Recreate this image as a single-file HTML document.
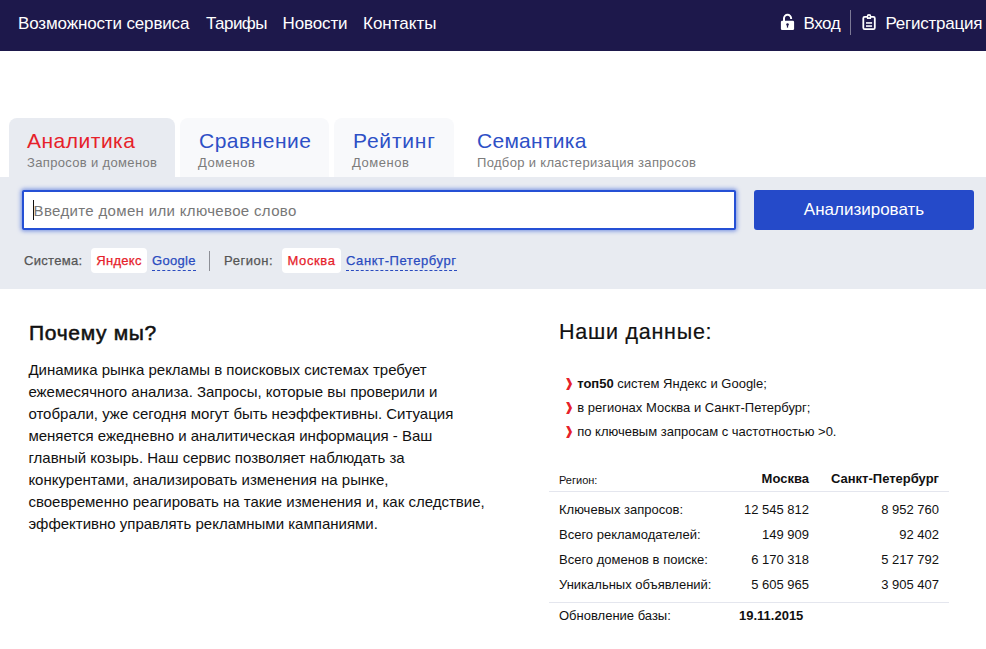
<!DOCTYPE html>
<html lang="ru">
<head>
<meta charset="utf-8">
<title>Аналитика запросов и доменов</title>
<style>
*{box-sizing:border-box;margin:0;padding:0}
html,body{width:986px;height:649px;overflow:hidden;background:#fff}
body{position:relative;font-family:"Liberation Sans",sans-serif;color:#111}
.abs{position:absolute;white-space:nowrap}
#hdr{position:absolute;left:0;top:0;width:986px;height:51px;background:#1d184b}
.nav{position:absolute;top:12px;height:24px;line-height:24px;font-size:17px;color:#fff;white-space:nowrap}
#panel{position:absolute;left:0;top:177px;width:986px;height:112px;background:#e8ebf1}
.tab{position:absolute;top:118px;height:59px;border-radius:8px 8px 0 0;background:#f8f9fb}
.tab.on{background:#e8ebf1}
.tab b{position:absolute;left:18px;top:9.5px;font-weight:400;font-size:21px;line-height:26px;color:#2e50c6;white-space:nowrap}
.tab.on b{color:#e6212a}
.tab i{position:absolute;left:18px;top:36px;font-style:normal;font-size:13px;line-height:18px;color:#7c7c7c;white-space:nowrap}
#inp{position:absolute;left:22px;top:190px;width:714px;height:40px;background:#fff;border:2px solid #2550d5;box-shadow:0 0 4px 1px rgba(37,80,213,.6);border-radius:2px}
#inp span{position:absolute;left:9.6px;top:9px;letter-spacing:.34px;font-size:15px;line-height:20px;color:#777;white-space:nowrap}
#inp u{position:absolute;left:9px;top:8px;width:1px;height:20px;background:#111}
#btn{position:absolute;left:754px;top:190px;width:220px;height:40px;background:#254ac9;border-radius:3px;color:#fff;font-size:17px;line-height:40px;text-align:center}
.f{position:absolute;top:250px;height:22px;line-height:22px;font-size:13px;font-weight:400;-webkit-text-stroke:.25px currentColor;letter-spacing:.32px;white-space:nowrap;color:#555}
.pill{background:#fff;border-radius:4px;color:#e6212a;text-align:center;top:248px;height:25px;line-height:25px}
.lnk{color:#2a4bbf}
.lnk:after{content:"";position:absolute;left:0;right:0;top:20px;border-top:1px dashed #2a4bbf}
h2{position:absolute;font-size:21px;line-height:28px;white-space:nowrap;color:#111}
#para{position:absolute;left:28.4px;top:359px;white-space:nowrap;font-size:15px;line-height:22px;color:#111}
.bul{position:absolute;left:564.2px;font-size:13px;line-height:24px;white-space:nowrap;color:#111}
.bul em{font-style:normal;color:#e6212a;display:inline-block;width:13px;font-size:12px;line-height:12px;position:relative;top:-1px}
.row{position:absolute;left:549px;width:400px;height:25px;font-size:13px;line-height:25px;color:#111}
.row span{position:absolute;white-space:nowrap}
.row .c1{left:10px}
.row .c2{right:140px;text-align:right}
.row .c3{right:10px;text-align:right}
.hr{position:absolute;left:549px;width:400px;height:1px;background:#e4e6ee}
</style>
</head>
<body>
<div id="hdr">
  <span class="nav" style="left:18px;letter-spacing:-.14px">Возможности сервиса</span>
  <span class="nav" style="left:206px;letter-spacing:-.55px">Тарифы</span>
  <span class="nav" style="left:282.5px;letter-spacing:-.13px">Новости</span>
  <span class="nav" style="left:363px">Контакты</span>
  <svg class="abs" style="left:775px;top:9px" width="30" height="26" viewBox="775 9 30 26">
    <rect x="780.9" y="20.7" width="13.2" height="9.3" rx="1.3" fill="#fff"/>
    <path d="M784 21.5 V18.35 A3.55 3.55 0 0 1 791.1 18.35 V19" fill="none" stroke="#fff" stroke-width="2"/>
    <circle cx="787.5" cy="24.4" r="1.25" fill="#1d184b"/><rect x="786.9" y="24.4" width="1.2" height="3.2" fill="#1d184b"/>
  </svg>
  <span class="nav" style="left:803.5px;letter-spacing:-.45px">Вход</span>
  <div class="abs" style="left:850px;top:10px;width:1px;height:25px;background:#7c7996"></div>
  <svg class="abs" style="left:855px;top:9px" width="30" height="26" viewBox="855 9 30 26">
    <rect x="863.3" y="16.9" width="11.5" height="12.3" rx="1.4" fill="none" stroke="#fff" stroke-width="1.8"/>
    <rect x="866.9" y="15.6" width="4.2" height="3.4" rx=".6" fill="#fff"/>
    <circle cx="869" cy="16.4" r="2.35" fill="#fff"/>
    <circle cx="869" cy="16.5" r=".85" fill="#1d184b"/>
    <rect x="866" y="22.1" width="6.1" height="1.7" fill="#f0f0f6"/>
    <rect x="866" y="25.2" width="6.1" height="1.7" fill="#f0f0f6"/>
  </svg>
  <span class="nav" style="left:885.5px;letter-spacing:-.24px">Регистрация</span>
</div>

<div class="tab on" style="left:9px;width:166px"><b style="letter-spacing:.5px">Аналитика</b><i style="letter-spacing:.34px">Запросов и доменов</i></div>
<div class="tab" style="left:180px;width:149px"><b style="letter-spacing:.5px;left:19px">Сравнение</b><i style="letter-spacing:.55px">Доменов</i></div>
<div class="tab" style="left:334px;width:120px"><b style="letter-spacing:.8px;left:19px">Рейтинг</b><i style="letter-spacing:.55px">Доменов</i></div>
<div class="tab" style="left:459px;width:260px;background:none"><b style="letter-spacing:.27px">Семантика</b><i style="letter-spacing:.33px">Подбор и кластеризация запросов</i></div>

<div id="panel"></div>
<div id="inp"><u></u><span>Введите домен или ключевое слово</span></div>
<div id="btn">Анализировать</div>

<span class="f" style="left:24px">Система:</span>
<span class="f pill" style="left:91px;width:56px">Яндекс</span>
<span class="f lnk" style="left:152px">Google</span>
<div class="abs" style="left:209px;top:251px;width:1px;height:20px;background:#8d8f96"></div>
<span class="f" style="left:224px;letter-spacing:.55px">Регион:</span>
<span class="f pill" style="left:282px;width:59px;letter-spacing:.6px">Москва</span>
<span class="f lnk" style="left:346px;letter-spacing:.58px">Санкт-Петербург</span>

<h2 style="left:29px;top:319px;font-weight:400;-webkit-text-stroke:.55px #111;letter-spacing:.68px">Почему мы?</h2>
<p id="para">Динамика рынка рекламы в поисковых системах требует<br>ежемесячного анализа. Запросы, которые вы проверили и<br>отобрали, уже сегодня могут быть неэффективны. Ситуация<br>меняется ежедневно и аналитическая информация - Ваш<br>главный козырь. Наш сервис позволяет наблюдать за<br>конкурентами, анализировать изменения на рынке,<br>своевременно реагировать на такие изменения и, как следствие,<br>эффективно управлять рекламными кампаниями.</p>

<h2 style="left:559px;top:318px;font-weight:400;font-size:21.5px;letter-spacing:.75px;-webkit-text-stroke:.2px #111">Наши данные:</h2>
<div class="bul" style="top:371.5px"><em>❱</em><strong>топ50</strong> систем Яндекс и Google;</div>
<div class="bul" style="top:395.5px"><em>❱</em>в регионах Москва и Санкт-Петербург;</div>
<div class="bul" style="top:419.5px"><em>❱</em>по ключевым запросам с частотностью &gt;0.</div>

<div class="row" style="top:466px"><span class="c1" style="font-size:11px;top:2px">Регион:</span><span class="c2"><strong>Москва</strong></span><span class="c3"><strong>Санкт-Петербург</strong></span></div>
<div class="hr" style="top:491px"></div>
<div class="row" style="top:497px"><span class="c1">Ключевых запросов:</span><span class="c2">12 545 812</span><span class="c3">8 952 760</span></div>
<div class="row" style="top:522px"><span class="c1">Всего рекламодателей:</span><span class="c2">149 909</span><span class="c3">92 402</span></div>
<div class="row" style="top:547px"><span class="c1">Всего доменов в поиске:</span><span class="c2">6 170 318</span><span class="c3">5 217 792</span></div>
<div class="row" style="top:572px"><span class="c1">Уникальных объявлений:</span><span class="c2">5 605 965</span><span class="c3">3 905 407</span></div>
<div class="hr" style="top:602px"></div>
<div class="row" style="top:603px"><span class="c1">Обновление базы:</span><span style="left:190px"><strong>19.11.2015</strong></span></div>
</body>
</html>
